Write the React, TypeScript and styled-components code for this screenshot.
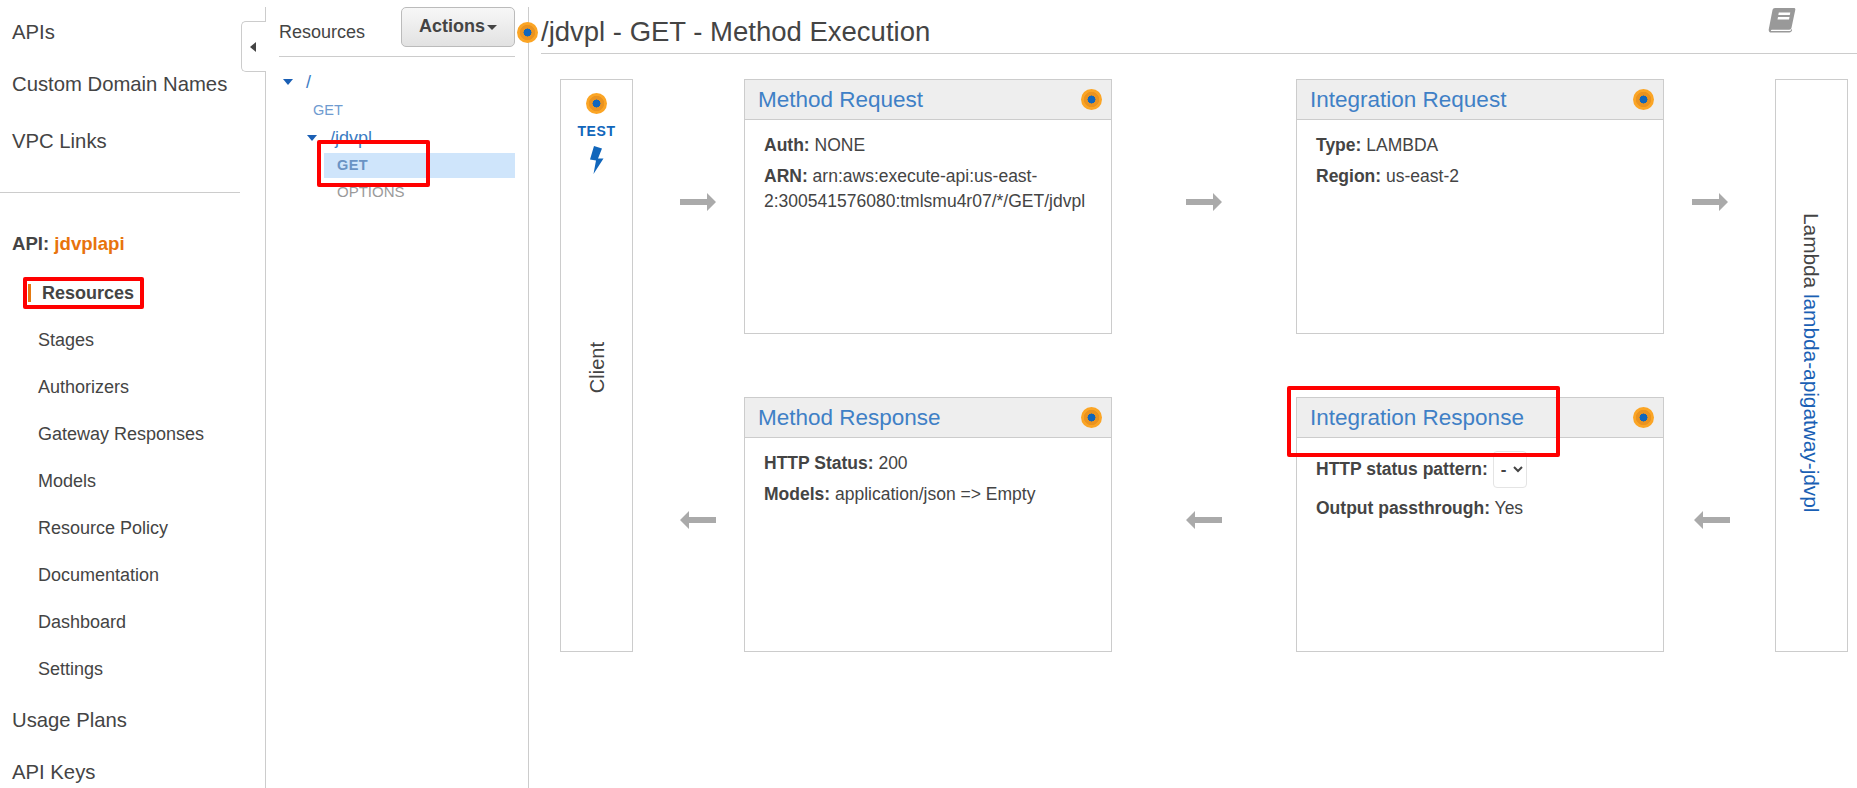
import React from 'react';
import styled, { createGlobalStyle } from 'styled-components';

const GlobalStyle = createGlobalStyle`
  html, body {
    margin: 0;
    padding: 0;
    background: #fff;
    font-family: "Liberation Sans", Arial, sans-serif;
    color: #444;
  }
`;

const Page = styled.div`
  position: relative;
  display: flex;
  width: 100%;
  height: 788px;
  overflow: hidden;
  padding-top: 7px;
  box-sizing: border-box;
`;

const Sidebar = styled.nav`
  position: relative;
  flex: 0 0 266px;
  box-sizing: border-box;
  padding-top: 13px;
  border-right: 1px solid #ccc;
`;

const CollapseTab = styled.div`
  position: absolute;
  right: -1px;
  top: 14px;
  width: 25px;
  height: 51px;
  box-sizing: border-box;
  background: #fff;
  border: 1px solid #ccc;
  border-right: none;
  border-radius: 5px 0 0 5px;
  display: flex;
  align-items: center;
  justify-content: center;
`;

const CollapseCaret = styled.span`
  width: 0;
  height: 0;
  margin-right: 2px;
  border-top: 5px solid transparent;
  border-bottom: 5px solid transparent;
  border-right: 6px solid #444;
`;

const NavTop = styled.a<{ $gap: number }>`
  display: block;
  margin: ${p => p.$gap}px 0 0 12px;
  font-size: 20.3px;
  line-height: 24px;
  color: #444;
`;

const NavRule = styled.hr`
  width: 240px;
  height: 1px;
  margin: 39px 0 0;
  border: none;
  background: #ccc;
`;

const ApiLabel = styled.div`
  margin: 39px 0 0 12px;
  font-size: 18.6px;
  line-height: 24px;
  font-weight: bold;
`;

const ApiName = styled.span`
  color: #e8730c;
`;

const NavSub = styled.a<{ $active?: boolean }>`
  display: flex;
  align-items: center;
  margin: ${p => (p.$active ? 25 : 23)}px 0 0 ${p => (p.$active ? 28 : 38)}px;
  font-size: 18px;
  line-height: 24px;
  font-weight: ${p => (p.$active ? 'bold' : 'normal')};
  color: #444;

  ${p => p.$active && `
    &::before {
      content: '';
      width: 3px;
      height: 18px;
      margin-right: 11px;
      background: #e47911;
    }
  `}
`;

const ResourcePanel = styled.section`
  flex: 0 0 263px;
  box-sizing: border-box;
  padding: 0 13px 0 13px;
  border-right: 1px solid #ccc;
`;

const PanelHeader = styled.div`
  display: flex;
  align-items: flex-start;
  justify-content: space-between;
  height: 50px;
  box-sizing: border-box;
  border-bottom: 1px solid #ccc;
`;

const PanelTitle = styled.div`
  margin-top: 13px;
  font-size: 18px;
  line-height: 24px;
`;

const ActionsButton = styled.button`
  display: flex;
  align-items: center;
  justify-content: center;
  gap: 2px;
  width: 114px;
  height: 40px;
  margin: 0;
  padding: 0 0 2px;
  box-sizing: border-box;
  border: 1px solid #bbb;
  border-radius: 5px;
  background: linear-gradient(#f7f7f7, #e2e2e2);
  font: bold 18px "Liberation Sans", Arial, sans-serif;
  color: #444;
`;

const ActionsCaret = styled.span`
  width: 0;
  height: 0;
  margin-top: 2px;
  border-left: 5px solid transparent;
  border-right: 5px solid transparent;
  border-top: 5px solid #444;
`;

const Tree = styled.div`
  padding-top: 13px;
`;

const TreePath = styled.div<{ $indent: number; $gap: number }>`
  display: flex;
  align-items: center;
  gap: 13px;
  margin-top: ${p => p.$gap}px;
  padding-left: ${p => p.$indent}px;
  font-size: 18px;
  line-height: 24px;
  color: #3b7cc4;
`;

const TreeCaret = styled.span`
  width: 0;
  height: 0;
  border-left: 5.5px solid transparent;
  border-right: 5.5px solid transparent;
  border-top: 6px solid #1a5fb4;
`;

const TreeMethod = styled.div<{ $indent: number; $gap: number; $muted?: boolean }>`
  margin-top: ${p => p.$gap}px;
  padding-left: ${p => p.$indent}px;
  font-size: ${p => (p.$muted ? 15 : 14.5)}px;
  line-height: 24px;
  color: ${p => (p.$muted ? '#9a9a9a' : '#6f9bd0')};
`;

const TreeSelected = styled.div`
  margin: 3px 0 0 45px;
  height: 25px;
  padding-left: 13px;
  background: #cfe5fb;
  font-size: 14.5px;
  line-height: 25px;
  font-weight: bold;
  letter-spacing: 0.4px;
  color: #6a93c4;
`;

const Main = styled.main`
  flex: 1;
  min-width: 0;
`;

const MainHeader = styled.header`
  display: flex;
  justify-content: space-between;
  align-items: flex-start;
  height: 47px;
  box-sizing: border-box;
  margin-left: 12px;
  padding-right: 61px;
  border-bottom: 1px solid #ccc;
`;

const MainTitle = styled.h1`
  margin: 0;
  padding-top: 4px;
  font-size: 27.5px;
  line-height: 42px;
  font-weight: normal;
  color: #444;
`;

const Diagram = styled.div`
  display: grid;
  grid-template-columns: 73px 111px 368px 184px 368px 111px 73px;
  grid-template-rows: 255px 255px;
  row-gap: 63px;
  padding: 25px 0 0 31px;
`;

const SideBox = styled.div<{ $column: number }>`
  grid-column: ${p => p.$column};
  grid-row: 1 / span 2;
  display: flex;
  flex-direction: column;
  align-items: center;
  box-sizing: border-box;
  border: 1px solid #ccc;
`;

const TestLabel = styled.div`
  margin-top: 8px;
  font-size: 14px;
  line-height: 18px;
  font-weight: bold;
  letter-spacing: 0.6px;
  color: #1166bb;
`;

const Bolt = styled.svg`
  margin-top: 6px;
`;

const ClientLabel = styled.div`
  margin-top: 168px;
  writing-mode: vertical-rl;
  transform: rotate(180deg);
  font-size: 20px;
  line-height: 24px;
`;

const LambdaLabel = styled.div`
  margin-top: 133px;
  margin-right: 2px;
  writing-mode: vertical-rl;
  font-size: 20.8px;
  line-height: 24px;
  white-space: nowrap;
`;

const LambdaLink = styled.span`
  color: #1a5fb4;
`;

const ArrowCell = styled.div<{ $before?: number; $after?: number }>`
  display: flex;
  justify-content: center;
  padding: 114px ${p => p.$after ?? 0}px 0 ${p => p.$before ?? 0}px;
`;

const ArrowIcon = styled.svg<{ $flip?: boolean }>`
  transform: ${p => (p.$flip ? 'scaleX(-1)' : 'none')};
`;

const Card = styled.div`
  display: flex;
  flex-direction: column;
  box-sizing: border-box;
  border: 1px solid #ccc;
`;

const CardHeader = styled.div`
  display: flex;
  align-items: center;
  justify-content: space-between;
  height: 40px;
  flex: none;
  box-sizing: border-box;
  padding: 0 9px 0 13px;
  background: #eee;
  border-bottom: 1px solid #ccc;
`;

const CardTitle = styled.a`
  font-size: 22.5px;
  color: #3f80c6;
`;

const CardBody = styled.div`
  padding: 13px 19px 0;
  font-size: 17.5px;
  line-height: 25px;
  color: #444;
`;

const Field = styled.div`
  margin-bottom: 6px;
`;

const FieldRow = styled.div`
  display: flex;
  align-items: center;
  gap: 5px;
  margin-bottom: 8px;
  font-weight: bold;
`;

const PatternSelect = styled.select`
  width: 34px;
  height: 37px;
  padding: 0 0 0 3px;
  background: #fff;
  border: 1px solid #e4e4e4;
  border-radius: 4px;
  font: bold 17px "Liberation Sans", Arial, sans-serif;
  color: #444;
`;

const DotMark = styled.span`
  display: block;
  flex: none;
  width: 21px;
  height: 21px;
  border-radius: 50%;
  background: radial-gradient(circle, #1166bb 0 26%, #ea9320 28% 50%, #fba525 53% 100%);
`;

const TitleDot = styled(DotMark)`
  position: absolute;
  left: 517px;
  top: 22px;
`;

const TestDot = styled(DotMark)`
  margin-top: 13px;
`;

const Callout = styled.div<{ $x: number; $y: number; $w: number; $h: number }>`
  position: absolute;
  left: ${p => p.$x}px;
  top: ${p => p.$y}px;
  width: ${p => p.$w}px;
  height: ${p => p.$h}px;
  box-sizing: border-box;
  border: 4px solid #f00;
  border-radius: 2px;
  pointer-events: none;
`;

const Arrow: React.FC<{ flip?: boolean }> = ({ flip }) => (
  <ArrowIcon $flip={flip} width="36" height="18" viewBox="0 0 36 18">
    <path d="M0 6h27V0l9 9-9 9v-6H0z" fill="#aaa" />
  </ArrowIcon>
);

const BookIcon = () => (
  <svg width="28" height="26" viewBox="0 0 28 26">
    <path
      d="M7 1h19c1 0 1.500 .8 1.300 1.800l-3.800 18c-.3 1.300-1 2-2.300 2H4.500c-1.400 0-1.700 .7-1.500 1.200H21.500c.8 0 1.500-.4 1.700-1.200l.6-1 .3 1.200c-.3 1.500-1.300 2.500-2.800 2.500H3.500C1.500 25.500 .3 24 .8 22L4.500 3C4.800 1.800 5.700 1 7 1z"
      fill="#999"
    />
    <path d="M10.800 5.500h11.500l-.5 2.500H10.300zM10 10h11.500l-.5 2.500H9.500z" fill="#fff" />
  </svg>
);

const subItems = [
  'Stages',
  'Authorizers',
  'Gateway Responses',
  'Models',
  'Resource Policy',
  'Documentation',
  'Dashboard',
  'Settings',
];

const App: React.FC = () => {
  return (
    <Page>
      <GlobalStyle />
      <Sidebar>
        <NavTop $gap={0}>APIs</NavTop>
        <NavTop $gap={28}>Custom Domain Names</NavTop>
        <NavTop $gap={33}>VPC Links</NavTop>
        <NavRule />
        <ApiLabel>
          API: <ApiName>jdvplapi</ApiName>
        </ApiLabel>
        <NavSub $active>Resources</NavSub>
        {subItems.map(item => (
          <NavSub key={item}>{item}</NavSub>
        ))}
        <NavTop $gap={27}>Usage Plans</NavTop>
        <NavTop $gap={28}>API Keys</NavTop>
        <CollapseTab>
          <CollapseCaret />
        </CollapseTab>
      </Sidebar>

      <ResourcePanel>
        <PanelHeader>
          <PanelTitle>Resources</PanelTitle>
          <ActionsButton>
            Actions
            <ActionsCaret />
          </ActionsButton>
        </PanelHeader>
        <Tree>
          <TreePath $indent={4} $gap={0}>
            <TreeCaret />/
          </TreePath>
          <TreeMethod $indent={34} $gap={4}>GET</TreeMethod>
          <TreePath $indent={28} $gap={4}>
            <TreeCaret />/jdvpl
          </TreePath>
          <TreeSelected>GET</TreeSelected>
          <TreeMethod $indent={58} $gap={2} $muted>OPTIONS</TreeMethod>
        </Tree>
      </ResourcePanel>

      <Main>
        <MainHeader>
          <MainTitle>/jdvpl - GET - Method Execution</MainTitle>
          <BookIcon />
        </MainHeader>
        <Diagram>
          <SideBox $column={1}>
            <TestDot />
            <TestLabel>TEST</TestLabel>
            <Bolt width="15" height="28" viewBox="0 0 15 28">
              <path d="M5 0l8 2.500-4 10h5.500L4.500 28 7 14.500 1 13.500z" fill="#1166bb" />
            </Bolt>
            <ClientLabel>Client</ClientLabel>
          </SideBox>

          <ArrowCell $before={19}><Arrow /></ArrowCell>
          <Card>
            <CardHeader>
              <CardTitle>Method Request</CardTitle>
              <DotMark />
            </CardHeader>
            <CardBody>
              <Field><b>Auth:</b> NONE</Field>
              <Field>
                <b>ARN:</b> arn:aws:execute-api:us-east-<br />
                2:300541576080:tmlsmu4r07/*/GET/jdvpl
              </Field>
            </CardBody>
          </Card>
          <ArrowCell><Arrow /></ArrowCell>
          <Card>
            <CardHeader>
              <CardTitle>Integration Request</CardTitle>
              <DotMark />
            </CardHeader>
            <CardBody>
              <Field><b>Type:</b> LAMBDA</Field>
              <Field><b>Region:</b> us-east-2</Field>
            </CardBody>
          </Card>
          <ArrowCell $after={19}><Arrow /></ArrowCell>

          <SideBox $column={7}>
            <LambdaLabel>
              Lambda <LambdaLink>lambda-apigatway-jdvpl</LambdaLink>
            </LambdaLabel>
          </SideBox>

          <ArrowCell $before={19}><Arrow flip /></ArrowCell>
          <Card>
            <CardHeader>
              <CardTitle>Method Response</CardTitle>
              <DotMark />
            </CardHeader>
            <CardBody>
              <Field><b>HTTP Status:</b> 200</Field>
              <Field><b>Models:</b> application/json =&gt; Empty</Field>
            </CardBody>
          </Card>
          <ArrowCell><Arrow flip /></ArrowCell>
          <Card>
            <CardHeader>
              <CardTitle>Integration Response</CardTitle>
              <DotMark />
            </CardHeader>
            <CardBody>
              <FieldRow>
                HTTP status pattern:
                <PatternSelect defaultValue="-">
                  <option>-</option>
                </PatternSelect>
              </FieldRow>
              <Field><b>Output passthrough:</b> Yes</Field>
            </CardBody>
          </Card>
          <ArrowCell $after={15}><Arrow flip /></ArrowCell>
        </Diagram>
      </Main>

      <TitleDot />
      <Callout $x={23} $y={277} $w={121} $h={32} />
      <Callout $x={317} $y={140} $w={113} $h={47} />
      <Callout $x={1287} $y={386} $w={273} $h={71} />
    </Page>
  );
};

export default App;
